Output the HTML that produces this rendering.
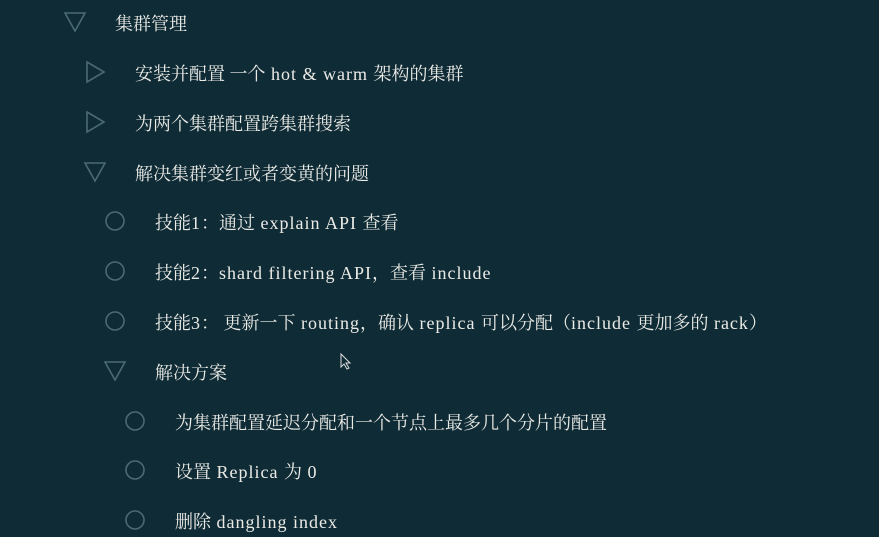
<!DOCTYPE html>
<html><head><meta charset="utf-8"><style>
body{margin:0;width:879px;height:537px;background:#0f2b36;overflow:hidden;position:relative;font-family:"Liberation Serif","Noto Serif CJK SC",serif;color:#ebebe6;font-size:18px}
.r{position:absolute;white-space:nowrap;line-height:20px}
.l{letter-spacing:1px}
svg{position:absolute}
</style></head><body>
<svg width="879" height="537" style="left:0;top:0" fill="none" stroke="#4b6a72" stroke-width="1.6">
<polygon points="65,13 85,13 75,31"/>
<polygon points="87,62 104,72 87,82"/>
<polygon points="87,112 104,122 87,132"/>
<polygon points="85,163 105,163 95,181"/>
<circle cx="115" cy="221" r="9"/>
<circle cx="115" cy="271" r="9"/>
<circle cx="115" cy="321" r="9"/>
<polygon points="105,362 125,362 115,380"/>
<circle cx="135" cy="421" r="9"/>
<circle cx="135" cy="470" r="9"/>
<circle cx="135" cy="520" r="9"/>
<path d="M341,354 L341,367 L344,364 L347,369 L349,368 L346,363 L350,363 Z" stroke="#ddd" stroke-width="1" fill="#0f2b36"/>
</svg>
<div class="r" style="left:115px;top:14px">集群管理</div>
<div class="r" style="left:135px;top:64px">安装并配置 一个<span class="l"> hot &amp; warm </span>架构的集群</div>
<div class="r" style="left:135px;top:114px">为两个集群配置跨集群搜索</div>
<div class="r" style="left:135px;top:164px">解决集群变红或者变黄的问题</div>
<div class="r" style="left:155px;top:213px">技能<span class="l">1</span>：通过<span class="l"> explain API </span>查看</div>
<div class="r" style="left:155px;top:263px">技能<span class="l">2</span>：<span class="l">shard filtering API</span>，查看<span class="l"> include</span></div>
<div class="r" style="left:155px;top:313px">技能<span class="l">3</span>： 更新一下<span class="l"> routing</span>，确认<span class="l"> replica </span>可以分配（<span class="l">include </span>更加多的<span class="l"> rack</span>）</div>
<div class="r" style="left:155px;top:363px">解决方案</div>
<div class="r" style="left:175px;top:413px">为集群配置延迟分配和一个节点上最多几个分片的配置</div>
<div class="r" style="left:175px;top:462px">设置<span class="l"> Replica </span>为<span class="l"> 0</span></div>
<div class="r" style="left:175px;top:512px">删除<span class="l"> dangling index</span></div>
</body></html>
